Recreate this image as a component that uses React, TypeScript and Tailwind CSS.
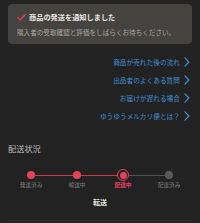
const links = ['商品が売れた後の流れ', '出品者のよくある質問', 'お届けが遅れる場合', 'ゆうゆうメルカリ便とは？'];

type Step = { label: string; state: 'done' | 'current' | 'todo' };

const steps: Step[] = [
  { label: '発送済み', state: 'done' },
  { label: '輸送中', state: 'done' },
  { label: '配達中', state: 'current' },
  { label: '配達済み', state: 'todo' },
];

const font = { fontFamily: '"Noto Sans CJK JP", "Noto Sans", sans-serif' };

function Chevron() {
  return (
    <svg width="6" height="10" viewBox="0 0 6 10" fill="none" className="shrink-0">
      <path d="M1 0.8 L4.8 5 L1 9.2" stroke="#3f8fce" strokeWidth="1.2" strokeLinecap="round" strokeLinejoin="round" />
    </svg>
  );
}

function Dot({ state }: { state: Step['state'] }) {
  if (state === 'current') {
    return (
      <div className="w-[12px] h-[12px] rounded-full border border-[#e0435a] flex items-center justify-center shrink-0">
        <div className="w-[7px] h-[7px] rounded-full bg-[#e0435a]" />
      </div>
    );
  }
  return (
    <div className={`w-[8px] h-[8px] rounded-full shrink-0 ${state === 'done' ? 'bg-[#e0435a]' : 'bg-[#5a5a5a]'}`} />
  );
}

export default function App() {
  return (
    <div className="w-[200px] h-[223px] bg-[#222222] flex flex-col overflow-hidden" style={font}>
      {/* notice card */}
      <div className="mx-[8px] mt-[4px] h-[40px] rounded-[4px] bg-[#45433f] px-[9px] pt-[10px]">
        <div className="flex items-center gap-[3px] h-[7px]">
          <svg width="9" height="7" viewBox="0 0 9 7" fill="none">
            <path d="M0.8 3.4 L3.2 5.9 L8.2 0.8" stroke="#e0435a" strokeWidth="1.3" strokeLinecap="round" strokeLinejoin="round" />
          </svg>
          <span className="text-[7.2px] leading-[7px] font-bold text-[#e8e6e3] whitespace-nowrap">商品の発送を通知しました</span>
        </div>
        <p className="mt-[8px] text-[6.6px] leading-[7px] text-[#a9a7a3] whitespace-nowrap">
          購入者の受取確認と評価をしばらくお待ちください。
        </p>
      </div>

      {/* help links */}
      <div className="mt-[9px] flex flex-col pr-[10px]">
        {links.map((l) => (
          <div key={l} className="h-[18px] flex items-center justify-end gap-[4px]">
            <span className="text-[6.7px] leading-[8px] text-[#3f8fce] whitespace-nowrap">{l}</span>
            <Chevron />
          </div>
        ))}
      </div>

      <div className="mt-[18px] px-[8px] text-[8.2px] leading-[10px] text-[#bdbdbd] whitespace-nowrap">配送状況</div>

      {/* progress */}
      <div className="mt-[16px] mx-[8px] grid grid-cols-4">
        {steps.map((s, i) => {
          const leftColor = i === 0 ? 'bg-transparent' : s.state === 'todo' ? 'bg-[#555555]' : 'bg-[#c7394d]';
          const rightColor =
            i === steps.length - 1 ? 'bg-transparent' : steps[i + 1].state === 'todo' ? 'bg-[#555555]' : 'bg-[#c7394d]';
          return (
            <div key={s.label} className="flex flex-col items-center">
              <div className="w-full h-[12px] flex items-center">
                <div className={`flex-1 h-[1px] ${leftColor}`} />
                <Dot state={s.state} />
                <div className={`flex-1 h-[1px] ${rightColor}`} />
              </div>
              <span
                className={`text-[5.7px] leading-[8px] whitespace-nowrap ${
                  s.state === 'current' ? 'text-[#e0435a] font-bold' : 'text-[#7c7c7c]'
                }`}
              >
                {s.label}
              </span>
            </div>
          );
        })}
      </div>

      <div className="mt-[9px] text-center text-[7px] leading-[9px] font-bold text-[#e6e6e6]">転送</div>

      <div className="mt-[13px] mx-[8px] h-[1px] bg-[#2f2f2f]" />
    </div>
  );
}
